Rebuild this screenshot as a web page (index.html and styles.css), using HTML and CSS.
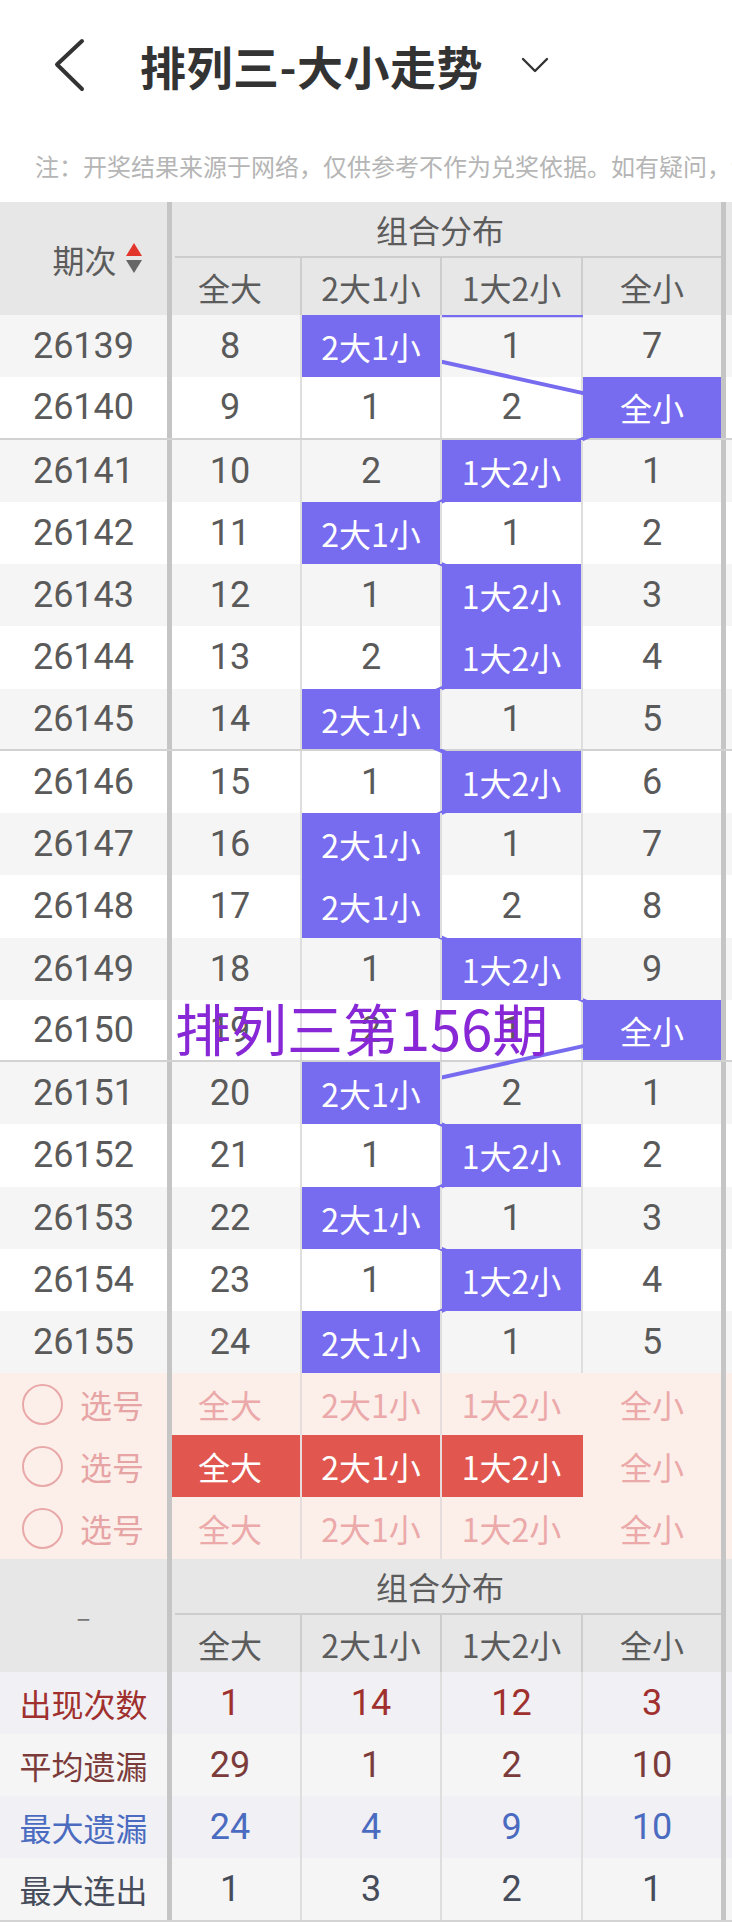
FILE: index.html
```html
<!DOCTYPE html>
<html lang="zh-CN">
<head>
<meta charset="utf-8">
<title>排列三-大小走势</title>
<link rel="stylesheet" href="styles.css">
</head>
<body>
<header class="titlebar">
  <svg class="back" viewBox="0 0 34 56"><polyline points="29,4 4,27.5 29,52"/></svg>
  <h1 class="title">排列三-大小走势</h1>
  <svg class="drop" viewBox="0 0 28 18"><polyline points="2,3 14,15 26,3"/></svg>
</header>
<p class="note">注：开奖结果来源于网络，仅供参考不作为兑奖依据。如有疑问，请以官方公告为准。</p>

<div class="chart">
  <div class="thead">
    <div class="th-period"><span>期次</span><svg class="sort" viewBox="0 0 18 32"><polygon class="up" points="9,0 17,13 1,13"/><polygon class="down" points="1,17 17,17 9,30"/></svg></div>
    <div class="th-group">
      <div class="th-title">组合分布</div>
      <div class="th-sub"><div class="hc h1">全大</div><div class="hc h2">2大1小</div><div class="hc h3">1大2小</div><div class="hc h4">全小</div></div>
    </div>
    <div class="tail"></div>
  </div>

  <div class="tbody">
    <svg class="trend" viewBox="0 0 732 1058">
      <line x1="441" y1="1" x2="583" y2="1"/>
      <polyline points="371,31.1 652,93.4 511.5,155.6 371,217.9 511.5,280.1 511.5,342.4 371,404.6 511.5,466.9 371,529.1 371,591.4 511.5,653.6 652,715.9 371,778.1 511.5,840.4 371,902.6 511.5,964.9 371,1027.1"/>
    </svg>
    <div class="row g"><div class="cp n">26139</div><div class="c c1 n">8</div><div class="c c2 hit">2大1小</div><div class="c c3 n">1</div><div class="c c4 n">7</div><div class="tail"></div></div>
    <div class="row cut"><div class="cp n">26140</div><div class="c c1 n">9</div><div class="c c2 n">1</div><div class="c c3 n">2</div><div class="c c4 hit">全小</div><div class="tail"></div></div>
    <div class="row g"><div class="cp n">26141</div><div class="c c1 n">10</div><div class="c c2 n">2</div><div class="c c3 hit">1大2小</div><div class="c c4 n">1</div><div class="tail"></div></div>
    <div class="row"><div class="cp n">26142</div><div class="c c1 n">11</div><div class="c c2 hit">2大1小</div><div class="c c3 n">1</div><div class="c c4 n">2</div><div class="tail"></div></div>
    <div class="row g"><div class="cp n">26143</div><div class="c c1 n">12</div><div class="c c2 n">1</div><div class="c c3 hit">1大2小</div><div class="c c4 n">3</div><div class="tail"></div></div>
    <div class="row"><div class="cp n">26144</div><div class="c c1 n">13</div><div class="c c2 n">2</div><div class="c c3 hit">1大2小</div><div class="c c4 n">4</div><div class="tail"></div></div>
    <div class="row g cut"><div class="cp n">26145</div><div class="c c1 n">14</div><div class="c c2 hit">2大1小</div><div class="c c3 n">1</div><div class="c c4 n">5</div><div class="tail"></div></div>
    <div class="row"><div class="cp n">26146</div><div class="c c1 n">15</div><div class="c c2 n">1</div><div class="c c3 hit">1大2小</div><div class="c c4 n">6</div><div class="tail"></div></div>
    <div class="row g"><div class="cp n">26147</div><div class="c c1 n">16</div><div class="c c2 hit">2大1小</div><div class="c c3 n">1</div><div class="c c4 n">7</div><div class="tail"></div></div>
    <div class="row"><div class="cp n">26148</div><div class="c c1 n">17</div><div class="c c2 hit">2大1小</div><div class="c c3 n">2</div><div class="c c4 n">8</div><div class="tail"></div></div>
    <div class="row g"><div class="cp n">26149</div><div class="c c1 n">18</div><div class="c c2 n">1</div><div class="c c3 hit">1大2小</div><div class="c c4 n">9</div><div class="tail"></div></div>
    <div class="row cut"><div class="cp n">26150</div><div class="c c1 n">19</div><div class="c c2 n">2</div><div class="c c3 n">1</div><div class="c c4 hit">全小</div><div class="tail"></div></div>
    <div class="row g"><div class="cp n">26151</div><div class="c c1 n">20</div><div class="c c2 hit">2大1小</div><div class="c c3 n">2</div><div class="c c4 n">1</div><div class="tail"></div></div>
    <div class="row"><div class="cp n">26152</div><div class="c c1 n">21</div><div class="c c2 n">1</div><div class="c c3 hit">1大2小</div><div class="c c4 n">2</div><div class="tail"></div></div>
    <div class="row g"><div class="cp n">26153</div><div class="c c1 n">22</div><div class="c c2 hit">2大1小</div><div class="c c3 n">1</div><div class="c c4 n">3</div><div class="tail"></div></div>
    <div class="row"><div class="cp n">26154</div><div class="c c1 n">23</div><div class="c c2 n">1</div><div class="c c3 hit">1大2小</div><div class="c c4 n">4</div><div class="tail"></div></div>
    <div class="row g"><div class="cp n">26155</div><div class="c c1 n">24</div><div class="c c2 hit">2大1小</div><div class="c c3 n">1</div><div class="c c4 n">5</div><div class="tail"></div></div>
    <div class="mark">排列三第156期</div>
  </div>

  <div class="pick">
    <div class="row"><div class="cp"><span class="ring"></span><span>选号</span></div><div class="c c1">全大</div><div class="c c2">2大1小</div><div class="c c3">1大2小</div><div class="c c4">全小</div><div class="tail"></div></div>
    <div class="row"><div class="cp"><span class="ring"></span><span>选号</span></div><div class="c c1 sel">全大</div><div class="c c2 sel">2大1小</div><div class="c c3 sel">1大2小</div><div class="c c4">全小</div><div class="tail"></div></div>
    <div class="row"><div class="cp"><span class="ring"></span><span>选号</span></div><div class="c c1">全大</div><div class="c c2">2大1小</div><div class="c c3">1大2小</div><div class="c c4">全小</div><div class="tail"></div></div>
  </div>

  <div class="thead">
    <div class="th-period"><span class="dash">–</span></div>
    <div class="th-group">
      <div class="th-title">组合分布</div>
      <div class="th-sub"><div class="hc h1">全大</div><div class="hc h2">2大1小</div><div class="hc h3">1大2小</div><div class="hc h4">全小</div></div>
    </div>
    <div class="tail"></div>
  </div>

  <div class="stats">
    <div class="row s1"><div class="cp">出现次数</div><div class="c c1 n">1</div><div class="c c2 n">14</div><div class="c c3 n">12</div><div class="c c4 n">3</div><div class="tail"></div></div>
    <div class="row s2"><div class="cp">平均遗漏</div><div class="c c1 n">29</div><div class="c c2 n">1</div><div class="c c3 n">2</div><div class="c c4 n">10</div><div class="tail"></div></div>
    <div class="row s3"><div class="cp">最大遗漏</div><div class="c c1 n">24</div><div class="c c2 n">4</div><div class="c c3 n">9</div><div class="c c4 n">10</div><div class="tail"></div></div>
    <div class="row s4"><div class="cp">最大连出</div><div class="c c1 n">1</div><div class="c c2 n">3</div><div class="c c3 n">2</div><div class="c c4 n">1</div><div class="tail"></div></div>
  </div>
</div>
</body>
</html>
```

FILE: styles.css
```css
* { box-sizing: border-box; margin: 0; padding: 0; }
body {
  margin: 0;
  width: 732px;
  background: #fff;
  font-family: "Noto Sans CJK SC", sans-serif;
  font-size: 32px;
  color: #5a5a5a;
}

/* title bar */
.titlebar { height: 130px; display: flex; align-items: center; padding-left: 53px; }
.back { width: 34px; height: 56px; flex: none; }
.back polyline { fill: none; stroke: #333; stroke-width: 4; stroke-linecap: round; stroke-linejoin: round; }
.title { margin-left: 53px; font-size: 46px; font-weight: 700; color: #333; letter-spacing: 0.5px; line-height: 1; }
.drop { width: 28px; height: 18px; margin-left: 38px; flex: none; }
.drop polyline { fill: none; stroke: #333; stroke-width: 2.4; stroke-linecap: round; stroke-linejoin: round; }
.note {
  height: 72px; line-height: 72px; padding-left: 35px;
  font-size: 24px; color: #b5b5b5; white-space: nowrap; overflow: hidden;
}

/* numbers */
.n { font-family: Roboto, "Noto Sans", sans-serif; font-size: 36px; }

/* header */
.thead { display: flex; height: 113px; background: #e7e7e7; color: #5c5c5c; }
.th-period {
  width: 172px; border-right: 5px solid #c5c5c5;
  display: flex; align-items: center; justify-content: center; gap: 8px; padding-left: 28px;
}
.sort { width: 18px; height: 32px; }
.sort .up { fill: #e2352b; }
.sort .down { fill: #666; }
.dash { color: #777; padding-right: 28px; font-size: 26px; }
.th-group { width: 554px; border-right: 5px solid #c5c5c5; display: flex; flex-direction: column; }
.th-title {
  height: 56px; margin-left: 3px; border-bottom: 2px solid #cdcdcd;
  display: flex; align-items: center; justify-content: center; padding-right: 16px;
}
.th-sub { flex: 1; display: flex; }
.hc { display: flex; align-items: center; justify-content: center; border-right: 2px solid #cdcdcd; }
.h1 { width: 130px; padding-right: 12px; }
.h2 { width: 140px; }
.h3 { width: 141px; }
.h4 { width: 138px; border-right: 0; }
.tail { flex: 1; }

/* body rows */
.tbody { position: relative; }
.trend { position: absolute; left: 0; top: 0; width: 732px; height: 1058px; z-index: 1; pointer-events: none; }
.trend polyline, .trend line { fill: none; stroke: #776bf0; stroke-width: 4; stroke-linejoin: round; }
.trend line { stroke-width: 2.5; }
.row { display: flex; height: 62.25px; background: #fff; }
.row.g { background: #f5f5f5; }
.row.cut { border-bottom: 2px solid #d2d2d2; }
.cp {
  width: 172px; border-right: 5px solid #c5c5c5;
  display: flex; align-items: center; justify-content: center;
}
.c { display: flex; align-items: center; justify-content: center; border-right: 2px solid #dedede; }
.c1 { width: 130px; padding-right: 12px; }
.c2 { width: 140px; }
.c3 { width: 141px; }
.c4 { width: 143px; border-right: 5px solid #c5c5c5; }
.hit { background: #776bf0; color: #fff; position: relative; z-index: 2; }
.mark {
  position: absolute; left: 175px; top: 684px; z-index: 3;
  font-size: 56px; line-height: 56px; color: #8727d6; white-space: nowrap;
}

/* pick rows */
.pick .row { height: 62px; background: #fcefea; }
.pick .cp { justify-content: flex-start; padding-left: 22px; gap: 17px; color: #e6a4a4; }
.ring { width: 41px; height: 41px; border: 2.5px solid #e9a8a8; border-radius: 50%; flex: none; }
.pick .c { color: #eba9a9; border-right-color: #e6dcdc; }
.pick .c3 { border-right-color: transparent; }
.pick .c4 { border-right-color: #c5c5c5; }
.pick .sel { background: #e1574f; color: #fff; }

/* stats */
.stats { border-bottom: 2px solid #d4d4d4; }
.stats .row { height: 62px; }
.s1.row { background: #f0f0f5; color: #a0302e; }
.s2.row { background: #f5f5f5; color: #7b3b3b; }
.s3.row { background: #f0f0f5; color: #4a6bc0; }
.s4.row { background: #f5f5f5; color: #464c5a; }
```
